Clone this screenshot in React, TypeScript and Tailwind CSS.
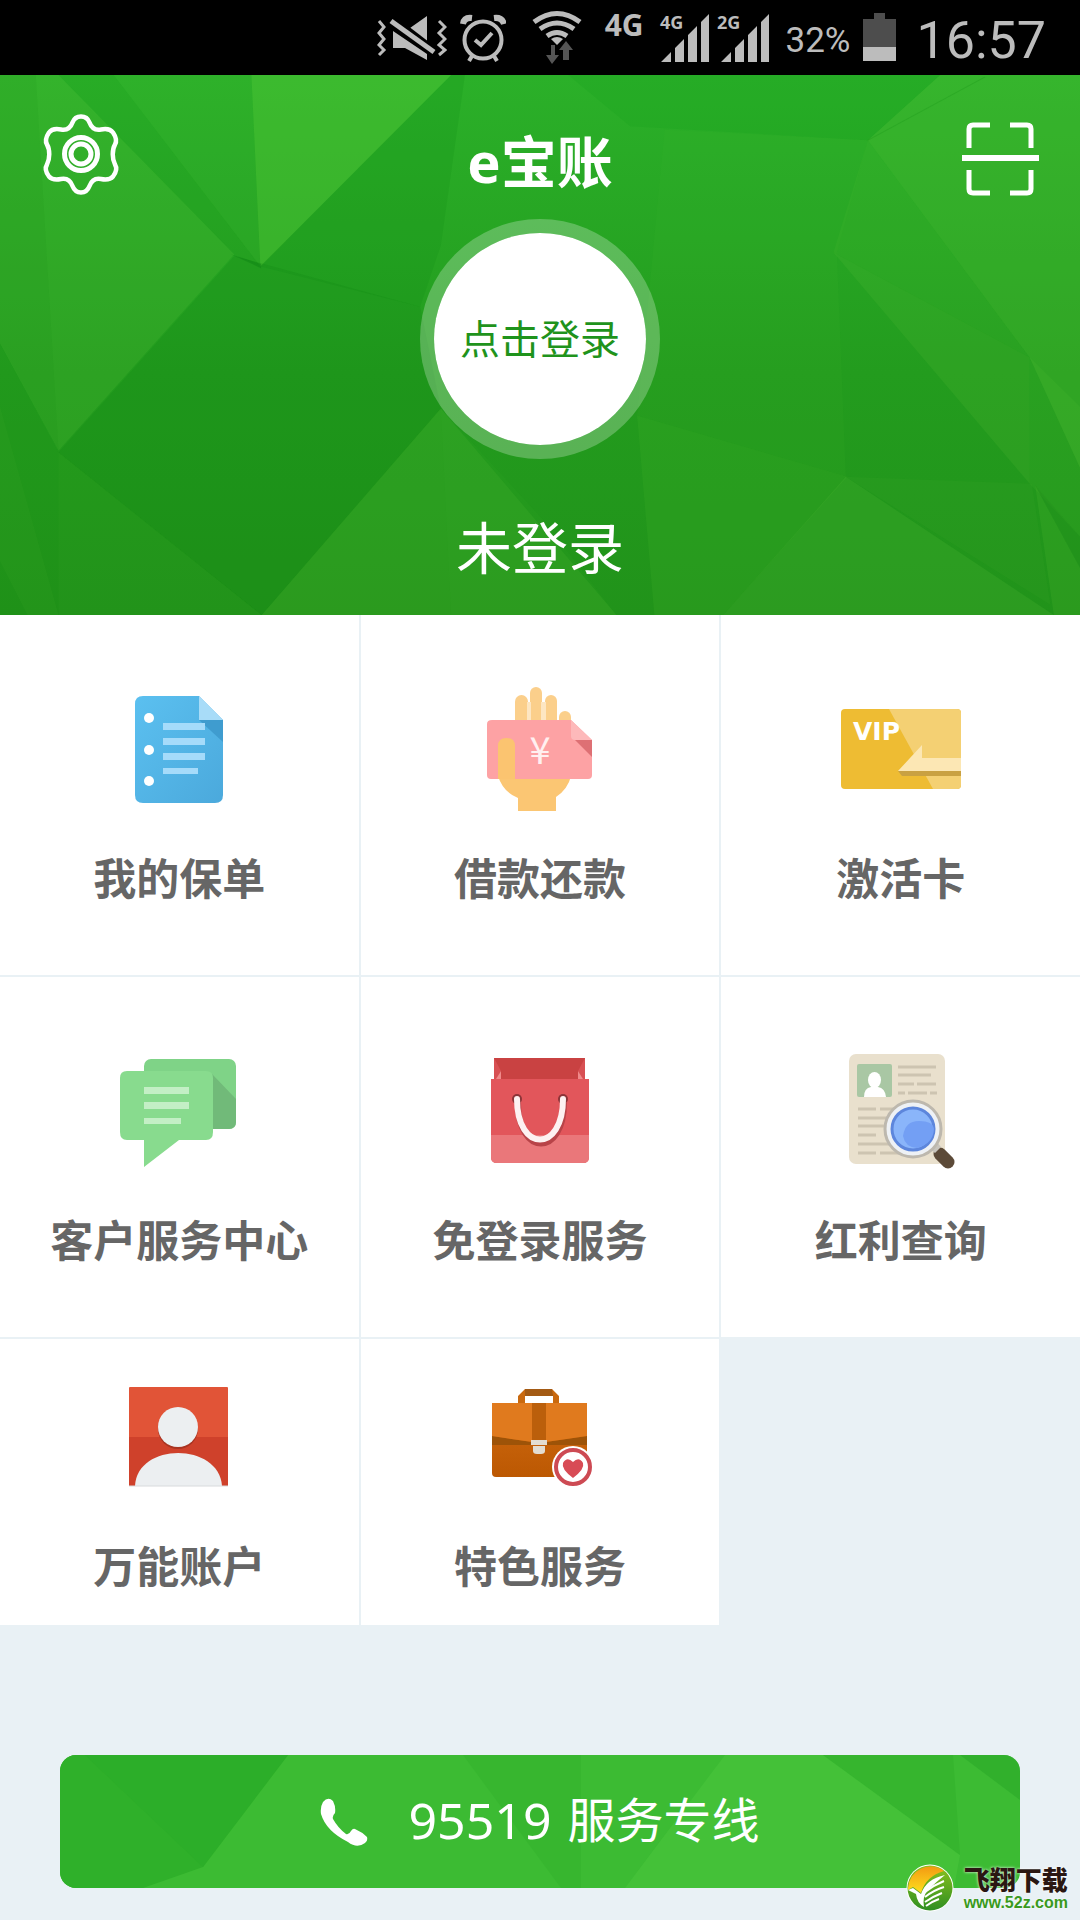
import type { ReactNode } from "react";

function VibrateIcon() {
  return (
    <svg className="w-[70px] h-[75px]" viewBox="376 0 70 75" fill="#bcbcbc" aria-hidden="true">
      <path d="M426 16v28l-17-16zM392 31v17h12l22 12V54z" />
      <path d="M392 20l43 33" stroke="#000" strokeWidth="9" />
      <path d="M390 21l43 31" stroke="#bcbcbc" strokeWidth="5" />
      <path
        d="M378 21l5 6-5 6 5 6-5 6 5 5-5 5M438 21l6 6-6 6 6 6-6 6 6 5-6 5"
        fill="none"
        stroke="#bcbcbc"
        strokeWidth="3"
      />
    </svg>
  );
}

function AlarmIcon() {
  return (
    <svg className="w-[49px] h-[75px]" viewBox="457 0 49 75" fill="none" stroke="#bcbcbc" strokeWidth="4" aria-hidden="true">
      <circle cx="483" cy="40" r="18.5" />
      <path d="M475 40l6 5 11-12M472 56l-3 5M494 56l3 5" strokeWidth="4" />
      <path d="M463 24q1-7 9-6M494 18q8-1 10 6" strokeWidth="6" />
    </svg>
  );
}

function WifiIcon() {
  return (
    <svg className="w-[63px] h-[75px]" viewBox="533 0 63 75" fill="none" stroke="#bcbcbc" strokeWidth="5" aria-hidden="true">
      <path d="M535 22q23-17 46 0M541 29q17-12 34 0M548 36q10-7 20 0" />
      <path d="M552 39q6-4 12 0l-6 6z" fill="#bcbcbc" stroke="none" />
      <path d="M556 45v10h4l-7 9-6-9h5V45zM564 60V50h-4l7-9 7 9h-4v10z" fill="#555" stroke="none" />
    </svg>
  );
}

function SignalIcon() {
  return (
    <svg className="w-[122px] h-[75px]" viewBox="653 0 122 75" fill="#bcbcbc" aria-hidden="true">
      <path d="M660 62l10-10v10zM674 48l9-9v23h-9zM687 35l9-9v36h-9zM700 22l8-8v48h-8z" />
      <path d="M720 62l10-10v10zM734 48l9-9v23h-9zM747 35l9-9v36h-9zM760 22l8-8v48h-8z" />
      <text x="659" y="29" className="font-bold text-[18px] font-['Noto_Sans']">4G</text>
      <text x="716" y="29" className="font-bold text-[18px] font-['Noto_Sans']">2G</text>
    </svg>
  );
}

function BatteryIcon() {
  return (
    <svg className="w-[46px] h-[75px]" viewBox="859 0 46 75" aria-hidden="true">
      <path d="M872 13h11v6h11v28h-33V19h11z" fill="#4d4d4d" />
      <path d="M861 47h33v14h-33z" fill="#bcbcbc" />
    </svg>
  );
}

function StatusBar() {
  return (
    <div className="flex flex-row items-center justify-end gap-[10px] h-[75px] pr-[34px] bg-black text-[#bcbcbc]">
      <VibrateIcon />
      <AlarmIcon />
      <div className="w-1.5" />
      <WifiIcon />
      <span className="h-[75px] pt-1 font-['Noto_Sans'] font-bold text-[30px] leading-[42px]">4G</span>
      <SignalIcon />
      <span className="font-[Roboto] text-[35px] leading-[75px] pt-[6px]">32%</span>
      <BatteryIcon />
      <span className="font-[Roboto] text-[52px] leading-[75px] pt-[6px]">16:57</span>
    </div>
  );
}

function HeaderFacets() {
  return (
    <svg className="absolute inset-0 w-full h-full" viewBox="0 14 1568 1540" preserveAspectRatio="none" aria-hidden="true">
      <defs>
        <linearGradient id="base" x1="0" y1="0" x2="0" y2="1">
          <stop offset="0" stopColor="#2bb029" />
          <stop offset="0.55" stopColor="#239c1e" />
          <stop offset="1" stopColor="#21931a" />
        </linearGradient>
      </defs>
      <path d="M0 14h1568v1540H0z" fill="url(#base)" />
      <path d="M0 14h85L340 525 85 1085 0 780z" fill="#5cc43c" fillOpacity=".18" />
      <path d="M0 14h52l33 1071L0 780z" fill="#128a12" fillOpacity=".1" />
      <path d="M85 14h80l213 546-38-35z" fill="#0f8a14" fillOpacity=".1" />
      <path d="M165 14h200l13 546z" fill="#5cc43c" fillOpacity=".08" />
      <path d="M365 14h290L378 560z" fill="#5ccc3a" fillOpacity=".36" />
      <path d="M655 14h20L640 500l-30 175-232-115z" fill="#0f8a14" fillOpacity=".2" />
      <path d="M340 530l270 145 30 290-260 589L85 1090z" fill="#087a10" fillOpacity=".15" />
      <path d="M335 525l44 28v12z" fill="#087a10" fillOpacity=".35" />
      <path d="M0 780l85 310 295 464H0z" fill="#087a10" fillOpacity=".08" />
      <path d="M85 1090l295 464H85z" fill="#4ab52f" fillOpacity=".08" />
      <path d="M0 960l85 594H40L0 1400z" fill="#4ab52f" fillOpacity=".1" />
      <path d="M825 14h540l-105 186-345-40z" fill="#0f9a1a" fillOpacity=".16" />
      <path d="M965 170l295 30-45 320 13 640-303-175z" fill="#4fc033" fillOpacity=".08" />
      <path d="M1365 14h203v1120L1495 820 1260 200z" fill="#5cc43c" fillOpacity=".24" />
      <path d="M1260 200l235 620-285-300z" fill="#5cc43c" fillOpacity=".12" />
      <path d="M1260 200L1430 20" stroke="#1d9a1c" strokeOpacity=".4" strokeWidth="2" />
      <path d="M1210 520l285 300v360z" fill="#6cc842" fillOpacity=".14" />
      <path d="M1495 820l73 140v370l-73-150z" fill="#5cc43c" fillOpacity=".12" />
      <path d="M640 965L380 1554h515z" fill="#4ab52f" fillOpacity=".24" />
      <path d="M640 965l150 320 105 269H655z" fill="#4ab52f" fillOpacity=".06" />
      <path d="M925 985l305 175-180 394H950z" fill="#4ab52f" fillOpacity=".18" />
      <path d="M1228 1160l-178 394h480z" fill="#5cc43c" fillOpacity=".18" />
      <path d="M1228 1160l270 20 27 345z" fill="#4ab52f" fillOpacity=".1" />
      <path d="M1503 1185l65 145v224h-38z" fill="#4ab52f" fillOpacity=".24" />
      <path d="M1503 1185l65 145v90z" fill="#087a10" fillOpacity=".24" />
    </svg>
  );
}

function GearIcon() {
  return (
    <svg className="w-[100px] h-[100px]" viewBox="30 111 100 100" fill="none" stroke="#fff" aria-hidden="true">
      <path
        d="M81 116.500c4 0 7 2 8.500 6 2 5.500 6 8 11.500 7 5-1 9-1 12 3 3 4.500 4.500 8 2 12-3 5-3 14.500 0 20 2.500 4 1 8-2 12-3 3.500-7 3.500-12 2.500-5.500-1-9.500 1.500-11.500 7-1.500 4-4.500 6.500-8.500 6.500s-7-2.500-8.500-6.500c-2-5.500-6-8-11.500-7-5 1-9 1-12-2.500-3-4-4.500-8-2-12 3-5.500 3-15 0-20-2.500-4-1-7.500 2-12 3-4 7-4 12-3 5.500 1 9.500-1.500 11.500-7 1.500-4 4.500-6 8.500-6z"
        strokeWidth="4.500"
      />
      <circle cx="81" cy="154" r="16.500" strokeWidth="5" />
      <circle cx="81" cy="154" r="10" strokeWidth="5" />
    </svg>
  );
}

function ScanIcon() {
  return (
    <svg className="w-[100px] h-[100px]" viewBox="950 111 100 100" fill="none" stroke="#fff" strokeWidth="5" aria-hidden="true">
      <path d="M969 148v-19q0-4 4-4h17M1010 125h17q4 0 4 4v19M969 170v19q0 4 4 4h17M1010 193h17q4 0 4-4v-19" />
      <path d="M962 158h77" strokeWidth="6" />
    </svg>
  );
}

function PolicyIcon() {
  return (
    <g transform="translate(9 1)">
      <defs>
        <linearGradient id="doc" x1="0" y1="0" x2="1" y2="1">
          <stop offset="0" stopColor="#5bc0f0" />
          <stop offset="1" stopColor="#4ba9dc" />
        </linearGradient>
      </defs>
      <path d="M25 16h56l24 24v75q0 8-8 8H25q-8 0-8-8V24q0-8 8-8z" fill="url(#doc)" />
      <path d="M81 40h24v22z" fill="#3f9ccf" />
      <path d="M81 16l24 24H81z" fill="#a8dcf8" />
      <path d="M45 43h42v7H45zM45 58h42v7H45zM45 73h42v7H45zM45 88h35v6H45z" fill="#a5dbfa" />
      <circle cx="31" cy="38" r="5" fill="#fff" />
      <circle cx="31" cy="70" r="5" fill="#fff" />
      <circle cx="31" cy="101" r="5" fill="#fff" />
    </g>
  );
}

function LoanIcon() {
  return (
    <g transform="translate(10 1)">
      <g fill="#fbcf8b">
        <rect x="35" y="15" width="13" height="40" rx="6.500" />
        <rect x="50" y="7" width="12" height="48" rx="6" />
        <rect x="65" y="15" width="12" height="40" rx="6" />
        <rect x="79" y="31" width="12" height="30" rx="6" />
        <path d="M47 22h4v20h-4zM61 22h5v20h-5z" fill="#fde6c2" />
      </g>
      <path d="M18 96h73q-3 13-15 21v14H38v-13Q23 112 18 96z" fill="#fbc673" />
      <path d="M12 40h79l21 20v35q0 4-4 4H11q-4 0-4-4V44q0-4 5-4z" fill="#fda2a4" />
      <path d="M91 40l21 20H95q-4 0-4-4z" fill="#fdb9ba" />
      <path d="M95 60h17v17z" fill="#de7074" />
      <path d="M18 99V66q0-8 8.500-8T35 66v33z" fill="#fbc470" />
      <text x="60" y="84" textAnchor="middle" fill="#fff0f0" className="text-[38px] font-['Noto_Sans_CJK_SC']">¥</text>
    </g>
  );
}

function VipIcon() {
  return (
    <g transform="translate(-1 1)">
      <rect x="11" y="29" width="120" height="80" rx="4" fill="#eebc33" />
      <path d="M59 29h68q4 0 4 4v72q0 4-4 4h-24z" fill="#f4d073" />
      <path d="M68 91h63v5H72z" fill="#c9a142" />
      <path d="M68 91l24-26v13h39v13z" fill="#fce7b4" />
      <text x="23" y="60" fill="#fff" className="font-bold text-[25px] font-['DejaVu_Sans']">VIP</text>
    </g>
  );
}

function ChatIcon() {
  return (
    <g transform="translate(1 1)">
      <rect x="34" y="17" width="92" height="70" rx="7" fill="#7fd387" />
      <path d="M102 32l24 25v23q0 7-7 7h-17z" fill="#71ba79" />
      <path d="M17 29h79q7 0 7 7v54q0 8-7 8H69l-35 27V98H17q-7 0-7-8V36q0-7 7-7z" fill="#88db8e" />
      <path d="M34 45h45v7H34zM34 60h45v7H34zM34 76h37v6H34z" fill="#c3efc5" />
    </g>
  );
}

function BagIcon() {
  return (
    <>
      <path d="M24 17h91v24H24z" fill="#c94242" />
      <path d="M24 17l7 13-5 9h-2zM115 17l-7 13 5 9h2z" fill="#d85053" />
      <path d="M26 38l5-8v8zM113 38l-5-8v8z" fill="#f08a8a" />
      <path d="M21 38h98v78q0 6-6 6H27q-6 0-6-6z" fill="#e2565b" />
      <path d="M21 94h98v22q0 6-6 6H27q-6 0-6-6z" fill="#ea777a" />
      <circle cx="47" cy="58" r="5" fill="#8c3438" />
      <circle cx="93" cy="58" r="5" fill="#8c3438" />
      <path d="M48 62c0 54 46 54 46 0" fill="none" stroke="#b84348" strokeWidth="6" />
      <path d="M47 58c0 54 46 54 46 0" fill="none" stroke="#fdf1f1" strokeWidth="6" strokeLinecap="round" />
    </>
  );
}

function DividendIcon() {
  return (
    <>
      <rect x="18" y="13" width="96" height="110" rx="7" fill="#e9e0cd" />
      <rect x="26" y="23" width="35" height="33" rx="2" fill="#a9c7a4" />
      <path d="M33 56q0-9 7-10h7q7 1 8 10z" fill="#fff" />
      <ellipse cx="43.500" cy="39" rx="6.500" ry="8" fill="#fff" />
      <path
        d="M67 26h38M67 34h33M67 43h16M86 43h19M67 52h7M77 52h19M99 52h7M27 68h18M49 68h16M27 77h34M27 85h28M27 94h18M27 103h34M27 112h18M49 112h22"
        stroke="#cdc4b1"
        strokeWidth="3"
      />
      <path d="M109 113l8 8" stroke="#5c4a38" strokeWidth="13" strokeLinecap="round" />
      <path d="M99 108l7-7 4 5-6 6z" fill="#c8c4bc" />
      <circle cx="82" cy="88" r="28" fill="#eef1f5" stroke="#bdb8ae" strokeWidth="3" />
      <circle cx="82" cy="88" r="21" fill="#8ab5fa" stroke="#5d86dc" strokeWidth="3" />
      <path d="M72 95q2-15 16-15t15 8q-1 15-17 19-12-1-14-12z" fill="#739ff4" />
    </>
  );
}

function AccountIcon() {
  return (
    <>
      <rect x="20" y="20" width="99" height="99" rx="1" fill="#e15437" />
      <path d="M20 70h99v49H20z" fill="#cf412b" />
      <circle cx="69" cy="62" r="20" fill="#a93422" />
      <circle cx="69" cy="60" r="20" fill="#eceff1" />
      <path d="M26 119c2-44 84-44 87 0z" fill="#eceff1" />
      <path d="M20 119h99" stroke="#d8dadc" />
    </>
  );
}

function SpecialIcon() {
  return (
    <>
      <defs>
        <linearGradient id="case" x1="0" y1="0" x2="0" y2="1">
          <stop offset="0" stopColor="#cf6b12" />
          <stop offset="1" stopColor="#bc5802" />
        </linearGradient>
      </defs>
      <path d="M48 37v-8l7-7h27l7 7v8h-6v-8H55v8z" fill="#c9690f" />
      <path d="M55 22h27l1 7H55z" fill="#a35a14" />
      <path d="M22 36h95v70q0 4-4 4H26q-4 0-4-4z" fill="url(#case)" />
      <path d="M22 69l47 7 48-7v9H22z" fill="#9d5308" />
      <path d="M22 36h95v33l-48 7-47-7z" fill="#e07a1e" />
      <path d="M62 36h14v37H62z" fill="#bb5f0b" />
      <path d="M61 73h16v5H61zM63 79h12v5q0 3-4 3h-4q-4 0-4-3z" fill="#e3ddd2" />
      <circle cx="103" cy="100" r="21" fill="#fff" />
      <circle cx="103" cy="100" r="17" fill="#fff" stroke="#cd4a53" strokeWidth="4" />
      <path d="M103 111q-12-9-10-15 4-7 10-1 6-6 10 1 2 6-10 15z" fill="#d84b55" />
    </>
  );
}

function LeafLogo() {
  return (
    <svg className="w-12 h-12" viewBox="0 0 48 48" aria-hidden="true">
      <defs>
        <linearGradient id="sun" x1="0" y1="0" x2="0" y2="1">
          <stop offset="0" stopColor="#f39a12" />
          <stop offset="1" stopColor="#fde01e" />
        </linearGradient>
        <linearGradient id="leaf" x1="0" y1="0" x2="0" y2="1">
          <stop offset="0" stopColor="#8cc21c" />
          <stop offset="1" stopColor="#2f8f22" />
        </linearGradient>
      </defs>
      <circle cx="24" cy="24" r="23.500" fill="#fff" />
      <circle cx="24" cy="24" r="22.500" fill="url(#leaf)" />
      <path d="M2 24a22.500 22.500 0 0 1 36-17Q20 12 15 29l-8-6-5 3z" fill="url(#sun)" />
      <path d="M39 11Q20 15 15 30l-8-6-5 2 8 4q1 9 8 13-2-10 4-17 8-8 17-15z" fill="#fff" />
      <path d="M19 28q9-7 19-11M19 33q9-7 19-10M19 38q9-6 17-9M20 42q7-5 13-7" fill="none" stroke="#fff" strokeWidth="2" />
    </svg>
  );
}

const services = [
  { name: "我的保单", icon: <PolicyIcon /> },
  { name: "借款还款", icon: <LoanIcon /> },
  { name: "激活卡", icon: <VipIcon /> },
  { name: "客户服务中心", icon: <ChatIcon /> },
  { name: "免登录服务", icon: <BagIcon /> },
  { name: "红利查询", icon: <DividendIcon /> },
  { name: "万能账户", icon: <AccountIcon />, compact: true },
  { name: "特色服务", icon: <SpecialIcon />, compact: true },
];

function ServiceCell({ name, icon, compact }: { name: string; icon: ReactNode; compact?: boolean }) {
  return (
    <button
      type="button"
      className={`flex flex-col items-center bg-white ${compact ? "pt-7 pb-7" : "pt-16 pb-[66px]"}`}
    >
      <svg className="w-[140px] h-[140px]" viewBox="0 0 140 140" aria-hidden="true">
        {icon}
      </svg>
      <span className="mt-[30px] text-[43px] leading-[60px] font-bold text-[#666]">{name}</span>
    </button>
  );
}

export default function App() {
  return (
    <main className="relative flex flex-col min-h-screen bg-[#e9f1f5] font-['Noto_Sans','Noto_Sans_CJK_SC',sans-serif]">
      <StatusBar />
      <header className="relative text-white">
        <HeaderFacets />
        <div className="relative flex flex-col items-center pt-9 pb-7">
          <div className="flex flex-row items-center justify-between w-full px-[30px]">
            <button type="button" aria-label="设置">
              <GearIcon />
            </button>
            <h1 className="text-[56px] leading-[100px] font-bold">e宝账</h1>
            <button type="button" aria-label="扫一扫">
              <ScanIcon />
            </button>
          </div>
          <button
            type="button"
            className="mt-2 w-60 h-60 rounded-full border-[14px] border-white/25 bg-white bg-clip-padding text-[40px] text-[#1f931c]"
          >
            点击登录
          </button>
          <p className="mt-12 text-[56px] leading-[80px]">未登录</p>
        </div>
      </header>
      <section className="grid grid-cols-3 gap-0.5">
        {services.map((service) => (
          <ServiceCell key={service.name} {...service} />
        ))}
      </section>
      <div className="px-[60px] pt-[130px] pb-8">
        <a
          href="tel:95519"
          className="relative flex flex-row items-center justify-center h-[133px] rounded-2xl overflow-hidden bg-[#3cbb33] text-white"
        >
          <svg className="absolute inset-0 w-full h-full" viewBox="0 0 960 133" preserveAspectRatio="none" aria-hidden="true">
            <path d="M0 0h228l-85 112-60 21H0z" fill="#2fb02a" />
            <path d="M25 0h203l-85 112z" fill="#2aab28" fillOpacity=".5" />
            <path d="M403 0h118v133h-20z" fill="#2fb02a" fillOpacity=".4" />
            <path d="M665 0h98l137 100-6 33H565z" fill="#4bc83e" fillOpacity=".5" />
            <path d="M763 0h130l7 100z" fill="#2fb02a" fillOpacity=".5" />
            <path d="M900 0h60v45z" fill="#2aa828" fillOpacity=".6" />
          </svg>
          <svg className="relative w-12 h-12" viewBox="0 0 48 48" fill="#fff" aria-hidden="true">
            <path d="M3 4Q8-2 13 3q3 6 2 12-3 3-2 6 5 9 13 15 3 1 5-3 2-3 4-2 7 3 12 8 1 4-2 6-8 6-17-1Q6 33 1 16q-1-7 2-12z" />
          </svg>
          <span className="relative flex flex-row gap-4 ml-10 pb-1 text-[48px] leading-[60px]">
            <span className="text-[50px]">95519</span>
            <span>服务专线</span>
          </span>
        </a>
      </div>
      <div className="absolute right-3 bottom-2 flex flex-row items-center gap-[10px]">
        <LeafLogo />
        <div className="flex flex-col">
          <span className="text-[26px] leading-[30px] font-black font-['Noto_Sans_CJK_SC',sans-serif] text-[#2a1712] [text-shadow:0_0_3px_#fff]">
            飞翔下载
          </span>
          <span className="text-[16px] leading-[18px] font-bold font-['Liberation_Sans',sans-serif] text-[#3a9a1e] [text-shadow:0_0_2px_#fff]">
            www.52z.com
          </span>
        </div>
      </div>
    </main>
  );
}
